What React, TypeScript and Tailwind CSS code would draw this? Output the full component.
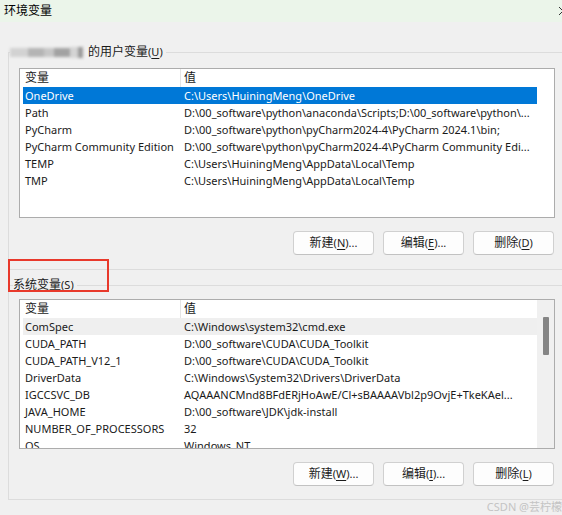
import React from 'react';

type Row = { name: string; value: string };

const userRows: Row[] = [
  { name: 'OneDrive', value: 'C:\\Users\\HuiningMeng\\OneDrive' },
  { name: 'Path', value: 'D:\\00_software\\python\\anaconda\\Scripts;D:\\00_software\\python\\...' },
  { name: 'PyCharm', value: 'D:\\00_software\\python\\pyCharm2024-4\\PyCharm 2024.1\\bin;' },
  { name: 'PyCharm Community Edition', value: 'D:\\00_software\\python\\pyCharm2024-4\\PyCharm Community Edi...' },
  { name: 'TEMP', value: 'C:\\Users\\HuiningMeng\\AppData\\Local\\Temp' },
  { name: 'TMP', value: 'C:\\Users\\HuiningMeng\\AppData\\Local\\Temp' },
];

const systemRows: Row[] = [
  { name: 'ComSpec', value: 'C:\\Windows\\system32\\cmd.exe' },
  { name: 'CUDA_PATH', value: 'D:\\00_software\\CUDA\\CUDA_Toolkit' },
  { name: 'CUDA_PATH_V12_1', value: 'D:\\00_software\\CUDA\\CUDA_Toolkit' },
  { name: 'DriverData', value: 'C:\\Windows\\System32\\Drivers\\DriverData' },
  { name: 'IGCCSVC_DB', value: 'AQAAANCMnd8BFdERjHoAwE/Cl+sBAAAAVbl2p9OvjE+TkeKAel...' },
  { name: 'JAVA_HOME', value: 'D:\\00_software\\JDK\\jdk-install' },
  { name: 'NUMBER_OF_PROCESSORS', value: '32' },
  { name: 'OS', value: 'Windows_NT' },
];

function VarList({ rows, selected, hover, scrollbar }: { rows: Row[]; selected?: number; hover?: number; scrollbar?: boolean }) {
  return (
    <div className="w-[536px] h-[150px] border border-[#acacac] bg-white flex overflow-hidden">
      <div className="w-[517px] pl-[3px] flex flex-col">
        {/* header */}
        <div className="h-[18px] flex items-center shrink-0 text-[12px]">
          <div className="w-[158px] h-full pl-[2px] flex items-center border-r border-[#e5e5e5]">变量</div>
          <div className="pl-[3px]">值</div>
        </div>
        {rows.map((r, i) => (
          <div
            key={r.name}
            className={
              'h-[17px] w-[514px] flex items-center shrink-0 leading-[17px] ' +
              (i === selected ? 'bg-[#0078d7] text-white' : i === hover ? 'bg-[#efefef]' : '')
            }
          >
            <div className="w-[158px] pl-[2px] whitespace-nowrap overflow-hidden">{r.name}</div>
            <div className="flex-1 pl-[3px] whitespace-nowrap overflow-hidden">{r.value}</div>
          </div>
        ))}
      </div>
      {scrollbar && (
        <div className="w-[17px] h-full bg-[#f0f0f0] pl-[6px] pt-[17px]">
          <div className="w-[6px] h-[38px] bg-[#858585] rounded-[1px]" />
        </div>
      )}
    </div>
  );
}

function Btn({ label, mn, tail }: { label: string; mn: string; tail: string }) {
  return (
    <button className="w-[81px] h-[24px] bg-[#fdfdfd] border border-[#d0d0d0] border-b-[#c2c2c2] rounded-[4px] text-[11px] text-[#1b1b1b] flex items-center justify-center">
      <span className="text-[12px]">{label}</span>(<span className="underline underline-offset-2">{mn}</span>){tail}
    </button>
  );
}

export default function App() {
  return (
    <div className="relative w-[562px] h-[515px] overflow-hidden bg-[#f0f0f0] text-[11px] text-[#1a1a1a] font-['Noto_Sans','Noto_Sans_CJK_SC',sans-serif]">
      {/* title bar */}
      <div className="h-[22px] bg-[#ebf5ea] flex items-center justify-between pl-[4px] text-black text-[12px]">
        <span>环境变量</span>
        <svg width="10" height="10" viewBox="0 0 10 10" className="mr-[-6px]">
          <path d="M1 1L9 9M9 1L1 9" stroke="#333" strokeWidth="1" />
        </svg>
      </div>

      <div className="pl-[8px] pt-[23px]">
        {/* user variables */}
        <fieldset className="w-[560px] border border-[#dcdcdc] p-0 m-0">
          <legend className="ml-[1px] pr-[3px] leading-[14px] flex items-center">
            <span className="inline-flex items-center h-[12px] w-[73px] mr-[5px] blur-[1.5px]">
              <span className="h-[9px] w-[18px] bg-[#d2d2d2]" />
              <span className="h-[9px] w-[16px] bg-[#b4b4b4]" />
              <span className="h-[9px] w-[10px] bg-[#c6c6c6]" />
              <span className="h-[9px] w-[16px] bg-[#a2a2a2]" />
              <span className="h-[11px] w-[8px] bg-[#d4d4d4]" />
              <span className="h-[11px] w-[5px] bg-[#9a9a9a]" />
            </span>
            <span>
              <span className="text-[12px]">的用户变量</span>(<span className="underline underline-offset-2">U</span>)
            </span>
          </legend>
          <div className="pl-[10px] pt-[9px] pb-[14px]">
            <VarList rows={userRows} selected={0} />
            <div className="w-[536px] flex justify-end gap-[9px] mt-[13px] pr-[1px]">
              <Btn label="新建" mn="N" tail="..." />
              <Btn label="编辑" mn="E" tail="..." />
              <Btn label="删除" mn="D" tail="" />
            </div>
          </div>
        </fieldset>

        {/* system variables */}
        <fieldset className="w-[560px] border border-[#dcdcdc] p-0 m-0 mt-[8px]">
          <legend className="ml-[4px] pr-[3px] leading-[14px]">
            <span className="text-[12px]">系统变量</span>(<span className="underline underline-offset-2">S</span>)
          </legend>
          <div className="pl-[10px] pt-[7px] pb-[13px]">
            <VarList rows={systemRows} hover={0} scrollbar />
            <div className="w-[536px] flex justify-end gap-[9px] mt-[13px] pr-[1px]">
              <Btn label="新建" mn="W" tail="..." />
              <Btn label="编辑" mn="I" tail="..." />
              <Btn label="删除" mn="L" tail="" />
            </div>
          </div>
        </fieldset>

        <div className="w-[554px] flex justify-end text-[11px] leading-[11px] mt-[1px] text-[#c4c4c4]">CSDN @芸柠檬</div>
      </div>

      {/* annotation */}
      <div className="absolute left-[8px] top-[259px] w-[101px] h-[33px] border-2 border-[#e8392b]" />
    </div>
  );
}
